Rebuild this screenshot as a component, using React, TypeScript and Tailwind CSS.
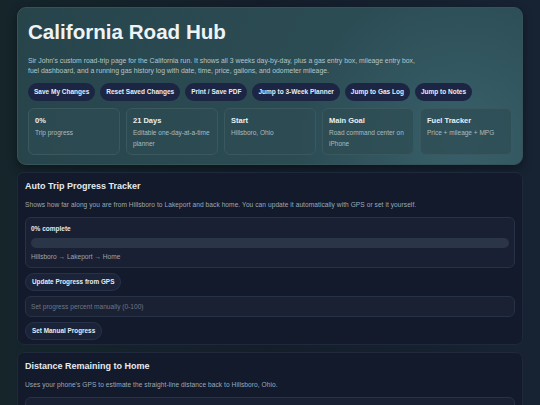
const actions = ["Save My Changes", "Reset Saved Changes", "Print / Save PDF", "Jump to 3-Week Planner", "Jump to Gas Log", "Jump to Notes"];

const stats = [
  { title: "0%", sub: "Trip progress" },
  { title: "21 Days", sub: "Editable one-day-at-a-time planner" },
  { title: "Start", sub: "Hillsboro, Ohio" },
  { title: "Main Goal", sub: "Road command center on iPhone" },
  { title: "Fuel Tracker", sub: "Price + mileage + MPG" },
];

const SmallButton = ({ label }: { label: string }) => (
  <button className="self-start rounded-full border border-[#27324a] bg-[#1a2338] px-[6px] py-[4px] text-[6.4px] font-bold leading-[8px] text-[#e6ebf3]">
    {label}
  </button>
);

const App = () => {
  return (
    <div className="min-h-[405px] h-[405px] overflow-hidden bg-[linear-gradient(90deg,#15252a_0%,#141e2b_50%,#172333_100%)] font-['Liberation_Sans',Arial,sans-serif]">
      <div className="flex flex-col gap-[7px] px-[17px] pt-[7px]">
        {/* hero */}
        <div className="rounded-[9px] border border-[#365359] bg-[radial-gradient(circle_at_88%_85%,#38606a_0%,#2c4c54_35%,#27444b_100%)] px-[10px] pt-[12px] pb-[9px] shadow-[0_4px_10px_rgba(0,0,0,0.35)]">
          <h1 className="text-[20.6px] font-bold leading-[24px] text-[#eef3f6]">California Road Hub</h1>
          <p className="mt-[12px] text-[6.85px] leading-[10px] text-[#b4c5ca]">
            Sir John's custom road-trip page for the California run. It shows all 3 weeks day-by-day, plus a gas entry box, mileage entry box,
            <br />
            fuel dashboard, and a running gas history log with date, time, price, gallons, and odometer mileage.
          </p>
          <div className="mt-[7px] flex flex-wrap gap-[5px]">
            {actions.map((a) => (
              <button key={a} className="rounded-full bg-[#1c2644] px-[6px] py-[5px] text-[6.5px] font-bold leading-[8px] text-[#e8edf5]">
                {a}
              </button>
            ))}
          </div>
          <div className="mt-[7px] grid grid-cols-5 gap-[6px]">
            {stats.map((s) => (
              <div key={s.title} className="rounded-[6px] border border-[#3b585e] bg-[#2e4b52]/70 px-[6px] pt-[7px] pb-[5px]">
                <div className="text-[7.5px] font-bold leading-[9px] text-[#e9eff2]">{s.title}</div>
                <div className="mt-[3px] text-[6.5px] leading-[10.5px] text-[#a9bcc1]">{s.sub}</div>
              </div>
            ))}
          </div>
        </div>

        {/* progress tracker */}
        <div className="rounded-[7px] border border-[#1f293b] bg-[#121a2b] px-[7px] pt-[8px] pb-[4px]">
          <h2 className="text-[9px] font-bold leading-[11px] text-[#e6eaf0]">Auto Trip Progress Tracker</h2>
          <p className="mt-[8px] text-[6.6px] leading-[10px] tracking-[0.06px] text-[#9ea9b8]">
            Shows how far along you are from Hillsboro to Lakeport and back home. You can update it automatically with GPS or set it yourself.
          </p>
          <div className="mt-[7px] rounded-[6px] border border-[#273148] bg-[#192033] px-[5px] pt-[6px] pb-[5px]">
            <div className="text-[6.5px] font-bold leading-[10px] text-[#e3e8ef]">0% complete</div>
            <div className="mt-[4px] h-[10px] rounded-full bg-[#2b3548]" />
            <div className="mt-[4px] text-[6.6px] leading-[10px] text-[#9aa5b5]">Hillsboro → Lakeport → Home</div>
          </div>
          <div className="mt-[5px] flex flex-col gap-[5px]">
            <SmallButton label="Update Progress from GPS" />
            <div className="flex h-[21px] items-center rounded-[6px] border border-[#273148] bg-[#1a2133] px-[5px] text-[6.6px] text-[#6c778a]">
              Set progress percent manually (0-100)
            </div>
            <SmallButton label="Set Manual Progress" />
          </div>
        </div>

        {/* distance */}
        <div className="rounded-[7px] border border-[#1f293b] bg-[#121a2b] px-[7px] pt-[8px] pb-[7px]">
          <h2 className="text-[9px] font-bold leading-[11px] text-[#e6eaf0]">Distance Remaining to Home</h2>
          <p className="mt-[8px] text-[6.6px] leading-[10px] tracking-[0.06px] text-[#9ea9b8]">
            Uses your phone's GPS to estimate the straight-line distance back to Hillsboro, Ohio.
          </p>
          <div className="mt-[7px] rounded-[6px] border border-[#273148] bg-[#192033] px-[5px] py-[5px]">
            <div className="text-[6.6px] leading-[10px] text-[#c9d0da]">Tap the button to calculate distance.</div>
            <div className="h-[20px]" />
          </div>
        </div>
      </div>
    </div>
  );
};

export default App;
